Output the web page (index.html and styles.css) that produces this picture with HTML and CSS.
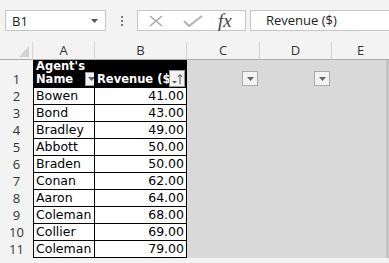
FILE: index.html
```html
<!DOCTYPE html>
<html lang="en">
<head>
  <meta charset="UTF-8" />
  <title>Agents - Revenue</title>
  <link rel="stylesheet" href="styles.css">
</head>
<body>
  <!-- formula bar -->
  <div class="toolbar">
    <div class="namebox">
      <span>B1</span>
      <svg class="caret" width="7" height="4" viewBox="0 0 7 4"><path d="M0 0h7L3.5 4z" fill="#555"/></svg>
    </div>
    <div class="dots"><i></i><i></i><i></i></div>
    <div class="fbuttons">
      <svg width="16" height="12" viewBox="0 0 16 12"><path d="M2 1l12 10M14 1L2 11" stroke="#a8a8a8" stroke-width="1.6" fill="none"/></svg>
      <svg width="20" height="12" viewBox="0 0 20 12"><path d="M1 6l5 5L19 1" stroke="#b4b4b4" stroke-width="2.2" fill="none"/></svg>
      <span class="fx">fx</span>
    </div>
    <div class="finput">Revenue ($)</div>
  </div>

  <div class="sheet">
    <div class="corner"><svg width="10" height="11" viewBox="0 0 10 11"><path d="M10 0v11H0z" fill="#d2d2d2"/></svg></div>
    <div class="colhead">A</div>
    <div class="colhead">B</div>
    <div class="colhead">C</div>
    <div class="colhead">D</div>
    <div class="colhead last">E</div>

    <div class="rowhead tall">1</div>
    <div class="cell hdr first">
      <span>Agent's<br>Name</span>
      <span class="filter"><svg width="7" height="4" viewBox="0 0 7 4"><path d="M0 0h7L3.5 4z" fill="#666"/></svg></span>
    </div>
    <div class="cell hdr">
      <span class="clip">Revenue ($)</span>
      <span class="filter sort"><svg width="12" height="12" viewBox="0 0 12 12"><path d="M1 8h5L3.5 10.5z" fill="#555"/><path d="M9 11V2" stroke="#555" stroke-width="1"/><path d="M6.8 4.2L9 1.5l2.2 2.7" stroke="#555" stroke-width="1" fill="none"/></svg></span>
    </div>
    <div class="grey"><span class="filter"><svg width="7" height="4" viewBox="0 0 7 4"><path d="M0 0h7L3.5 4z" fill="#666"/></svg></span></div>
    <div class="grey"><span class="filter"><svg width="7" height="4" viewBox="0 0 7 4"><path d="M0 0h7L3.5 4z" fill="#666"/></svg></span></div>
    <div class="grey edge"></div>
    <div class="grey block"></div>

    <div class="rowhead">2</div><div class="cell first">Bowen</div><div class="cell num">41.00</div>
    <div class="rowhead">3</div><div class="cell first">Bond</div><div class="cell num">43.00</div>
    <div class="rowhead">4</div><div class="cell first">Bradley</div><div class="cell num">49.00</div>
    <div class="rowhead">5</div><div class="cell first">Abbott</div><div class="cell num">50.00</div>
    <div class="rowhead">6</div><div class="cell first">Braden</div><div class="cell num">50.00</div>
    <div class="rowhead">7</div><div class="cell first">Conan</div><div class="cell num">62.00</div>
    <div class="rowhead">8</div><div class="cell first">Aaron</div><div class="cell num">64.00</div>
    <div class="rowhead">9</div><div class="cell first">Coleman</div><div class="cell num">68.00</div>
    <div class="rowhead">10</div><div class="cell first">Collier</div><div class="cell num">69.00</div>
    <div class="rowhead">11</div><div class="cell first">Coleman</div><div class="cell num">79.00</div>
  </div>
</body>
</html>
```

FILE: styles.css
```css
* {
  box-sizing: border-box;
}
body {
  margin: 0;
  background: #f3f3f3;
  font-family: "DejaVu Sans", Verdana, sans-serif;
  overflow: hidden;
}
.toolbar {
  height: 42px;
  display: flex;
  align-items: flex-start;
  padding: 10px 0 0 5px;
}
.namebox {
  width: 101px;
  height: 21px;
  background: #fff;
  border: 1px solid #c6c6c6;
  display: flex;
  align-items: center;
  justify-content: space-between;
  padding: 0 7px 0 6px;
  font-family: "Open Sans", sans-serif;
  font-size: 13px;
  color: #222;
}
.dots {
  width: 31px;
  height: 21px;
  display: flex;
  flex-direction: column;
  align-items: center;
  justify-content: center;
  gap: 2px;
}
.dots i {
  width: 2px;
  height: 2px;
  background: #777;
}
.fbuttons {
  width: 109px;
  height: 21px;
  background: #fff;
  border: 1px solid #c6c6c6;
  display: flex;
  align-items: center;
  gap: 19px;
  padding-left: 10px;
}
.fx {
  font-family: "Liberation Serif", serif;
  font-style: italic;
  font-size: 19px;
  color: #444;
  margin-left: -4px;
  line-height: 1;
}
.finput {
  flex: 1;
  height: 21px;
  margin-left: 4px;
  background: #fff;
  border: 1px solid #c6c6c6;
  border-right: none;
  padding-left: 15px;
  font-family: "Open Sans", sans-serif;
  font-size: 13px;
  line-height: 19px;
  color: #222;
}
.sheet {
  display: grid;
  grid-template-columns: 33px 62px 92px 73px 72px 57px;
  grid-template-rows: 18px 28px repeat(10, 17px);
}
.corner {
  display: flex;
  align-items: flex-end;
  justify-content: flex-end;
  padding: 0 3px 2px 0;
  border-bottom: 1px solid #ababab;
  border-right: 1px solid #d4d4d4;
}
.colhead {
  border-bottom: 1px solid #ababab;
  border-right: 1px solid #d4d4d4;
  text-align: center;
  font-family: "Open Sans", sans-serif;
  font-size: 13px;
  line-height: 17px;
  color: #333;
}
.colhead.last {
  border-right: none;
}
.rowhead {
  text-align: center;
  font-family: "Open Sans", sans-serif;
  font-size: 13px;
  line-height: 17px;
  color: #333;
}
.rowhead.tall {
  display: flex;
  align-items: flex-end;
  justify-content: center;
}
.cell {
  background: #fff;
  border-right: 1px solid #000;
  border-bottom: 1px solid #000;
  font-size: 12.5px;
  line-height: 16px;
  padding: 0 2px;
  color: #000;
  white-space: nowrap;
  overflow: hidden;
}
.cell.first {
  border-left: 1px solid #000;
}
.cell.num {
  text-align: right;
}
.cell.hdr {
  background: #000;
  color: #fff;
  font-weight: bold;
  font-size: 11.5px;
  line-height: 13px;
  display: flex;
  align-items: flex-end;
  justify-content: space-between;
  padding: 0 1px 1px 2px;
}
.cell.hdr .clip {
  overflow: hidden;
  flex: 1;
  min-width: 0;
}
.filter {
  width: 14px;
  height: 14px;
  background: #f2f2f2;
  border: 1px solid #9a9a9a;
  display: flex;
  align-items: center;
  justify-content: center;
  flex-shrink: 0;
}
.filter.sort {
  width: 16px;
  height: 17px;
  margin-bottom: -1px;
}
.grey {
  background: #d9d9d9;
  display: flex;
  align-items: flex-end;
  justify-content: flex-end;
  padding: 0 2px 2px 0;
}
.grey .filter {
  width: 16px;
  height: 15px;
  background: #f3f3f3;
  border-color: #ababab;
}
.grey.edge {
  border-right: 3px solid #c4c4c4;
}
.grey.block {
  grid-row: 3 / 13;
  grid-column: 4 / 7;
  border-right: 3px solid #c4c4c4;
}
```
